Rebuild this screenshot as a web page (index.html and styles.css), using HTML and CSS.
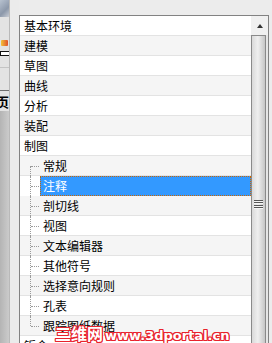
FILE: index.html
```html
<!DOCTYPE html>
<html lang="zh-CN">
<head>
  <meta charset="UTF-8">
  <meta name="viewport" content="width=device-width, initial-scale=1.0">
  <title>用户默认设置</title>
  <link rel="stylesheet" href="styles.css">
</head>
<body>
  <div class="window">
    <!-- Toolbar edge on the left -->
    <div class="side">
      <div class="tools">
        <span class="tool-icon"></span>
        <span class="pencil"></span>
        <span class="tool-bar"></span>
        <span class="tool-sep"></span>
        <span class="tool-sep dark"></span>
        <span class="page-char">页</span>
        <span class="tool-rest"></span>
      </div>
      <div class="side-gap"></div>
    </div>

    <!-- Category list -->
    <div class="listbox">
      <ul class="tree">
        <li class="item">基本环境</li>
        <li class="item">建模</li>
        <li class="item">草图</li>
        <li class="item">曲线</li>
        <li class="item">分析</li>
        <li class="item">装配</li>
        <li class="item">制图</li>
        <li class="item child first"><span>常规</span></li>
        <li class="item child selected"><span>注释</span></li>
        <li class="item child"><span>剖切线</span></li>
        <li class="item child"><span>视图</span></li>
        <li class="item child"><span>文本编辑器</span></li>
        <li class="item child"><span>其他符号</span></li>
        <li class="item child"><span>选择意向规则</span></li>
        <li class="item child"><span>孔表</span></li>
        <li class="item child last"><span>跟踪图纸数据</span></li>
        <li class="item">钣金</li>
      </ul>
      <div class="scrollbar">
        <div class="btn-up"><span class="arrow"></span></div>
        <div class="thumb"><span class="grip"></span></div>
      </div>
    </div>
  </div>

  <!-- Site watermark -->
  <div class="watermark"><span class="wm-cn">三维网</span><span class="wm-url">www.3dportal.cn</span></div>
</body>
</html>
```

FILE: styles.css
```css
/* Window background */
body {
  margin: 0;
  padding: 0;
  background: #ececec;
  font-family: "Noto Sans CJK SC", "Noto Sans", sans-serif;
  font-size: 12px;
  color: #000;
  overflow: hidden;
  height: 343px;
  position: relative;
}

.window {
  display: flex;
  height: 343px;
}

/* Left toolbar fragment */
.side {
  width: 19px;
  display: flex;
  flex-shrink: 0;
}

.tools {
  width: 9px;
  display: flex;
  flex-direction: column;
  background: #e3e3e3;
  border-right: 1px solid #b9b9b9;
  overflow: hidden;
}

.tool-icon {
  height: 17px;
  background: linear-gradient(135deg, #b8c2d0, #8c98aa 60%, #c8ccd4);
}

.pencil {
  height: 6px;
  margin: 23px 1px 0 1px;
  background: linear-gradient(90deg, #f2c23a, #e0502a);
  border-radius: 1px;
}

.tool-bar {
  height: 3px;
  margin-top: 5px;
  border: 1px solid #111;
  border-right: none;
  background: #fff;
}

.tool-sep {
  height: 1px;
  margin-top: 11px;
  background: #c4c4c4;
}

.tool-sep.dark {
  margin-top: 22px;
  background: #6e6e6e;
}

.page-char {
  font-weight: bold;
  font-size: 13px;
  line-height: 14px;
  margin-top: 4px;
  margin-left: -4px;
  white-space: nowrap;
}

.tool-rest {
  flex: 1;
  margin-top: 2px;
  background: linear-gradient(90deg, #b4b4b4, #cbcbcb);
}

.side-gap {
  flex: 1;
  background: #ebebeb;
}

/* List box */
.listbox {
  margin-top: 15px;
  width: 248px;
  border: 1px solid #828282;
  border-bottom: none;
  background: #fff;
  display: flex;
  flex-shrink: 0;
}

.tree {
  list-style: none;
  margin: 0;
  padding: 0;
  width: 231px;
}

.item {
  height: 19px;
  line-height: 19px;
  padding-left: 4px;
  border-bottom: 1px solid #e3e3e3;
  white-space: nowrap;
  position: relative;
}

.item:nth-child(even) {
  background: #f5f5f5;
}

/* Child rows with dotted tree lines */
.item.child {
  padding-left: 20px;
}

.item.child span {
  display: block;
  padding-left: 3px;
  height: 19px;
}

.item.child::before {
  content: "";
  position: absolute;
  left: 10px;
  top: 0;
  height: 20px;
  border-left: 1px dotted #9a9a9a;
}

.item.child.first::before {
  top: 10px;
  height: 10px;
}

.item.child.last::before {
  height: 10px;
}

.item.child::after {
  content: "";
  position: absolute;
  left: 11px;
  top: 10px;
  width: 8px;
  border-top: 1px dotted #9a9a9a;
}

.item.selected {
  height: 20px;
  border-bottom: none;
}

.item.selected span {
  height: 18px;
  line-height: 18px;
  padding-left: 2px;
  background: #3399ff;
  border: 1px dotted #cc6600;
  color: #fff;
}

/* Scroll bar */
.scrollbar {
  width: 17px;
  background: #e6e6e6;
  display: flex;
  flex-direction: column;
}

.btn-up {
  height: 19px;
  background: #f0f0f0;
  display: flex;
  justify-content: center;
  align-items: center;
}

.arrow {
  width: 0;
  height: 0;
  border-left: 3px solid transparent;
  border-right: 3px solid transparent;
  border-bottom: 4px solid #333;
}

.thumb {
  width: 13px;
  flex: 1;
  border: 1px solid #8a8a8a;
  border-bottom: none;
  background: linear-gradient(90deg, #d9d9d9, #efefef 45%, #c6c6c6);
  display: flex;
  flex-direction: column;
  align-items: center;
}

.grip {
  width: 9px;
  height: 9px;
  margin-top: 164px;
  background: repeating-linear-gradient(180deg, #555 0, #555 1px, #f4f4f4 1px, #f4f4f4 2px, transparent 2px, transparent 2.5px);
}

/* Watermark overlay */
.watermark {
  position: absolute;
  left: 55px;
  top: 321px;
  white-space: nowrap;
  color: #fff;
  font-weight: bold;
  text-shadow: 1px 0 #e8222b, -1px 0 #e8222b, 0 1px #e8222b, 0 -1px #e8222b,
    1px 1px #e8222b, -1px -1px #e8222b, 1px -1px #e8222b, -1px 1px #e8222b;
}

.wm-cn {
  font-family: "Noto Sans CJK SC", sans-serif;
  font-size: 16px;
}

.wm-url {
  font-family: "DejaVu Sans", sans-serif;
  font-size: 13px;
  margin-left: 2px;
}
```
